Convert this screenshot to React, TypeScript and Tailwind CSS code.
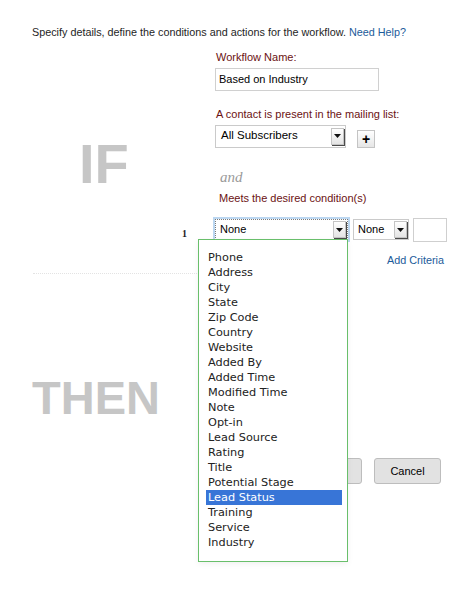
import React from "react";

const campos = [
  "Phone",
  "Address",
  "City",
  "State",
  "Zip Code",
  "Country",
  "Website",
  "Added By",
  "Added Time",
  "Modified Time",
  "Note",
  "Opt-in",
  "Lead Source",
  "Rating",
  "Title",
  "Potential Stage",
  "Lead Status",
  "Training",
  "Service",
  "Industry",
];

// Flechita de los selects viejos estilo Mac: caja clara con sombra oscura a la derecha.
function Flecha() {
  return (
    <span className="flex h-[17px] w-[13px] shrink-0 items-center justify-center border border-[#c4c4c4] bg-gradient-to-b from-white to-[#e4e4e4] shadow-[1px_1px_0_#4a4a4a]">
      <svg width="7" height="4" viewBox="0 0 7 4">
        <path d="M0 0h7L3.5 4z" fill="#111" />
      </svg>
    </span>
  );
}

export default function App() {
  return (
    <div className="relative h-[594px] w-[450px] overflow-hidden bg-white font-['Liberation_Sans',Arial,sans-serif] text-[#1e1e1e]">
      <p className="pl-[32px] pt-[26px] text-[10.8px] leading-[13px]">
        Specify details, define the conditions and actions for the workflow.{" "}
        <a className="text-[#1c5b9a]">Need Help?</a>
      </p>

      {/* IF */}
      <div className="mt-[12px] grid grid-cols-[215px_1fr]">
        <div className="col-start-1 row-span-6 row-start-1 pl-[79px] pt-[85px] text-[56px] font-bold leading-[56px] text-[#c6c6c6]">
          IF
        </div>

        <label className="col-start-2 pl-[1px] text-[11px] leading-[13px] text-[#6b1212]">Workflow Name:</label>
        <div className="col-start-2 mt-[3.5px] flex h-[23px] w-[164px] items-center border border-[#d0d0d0] pl-[3px] text-[11px] text-black">
          Based on Industry
        </div>

        <label className="col-start-2 mt-[17.5px] pl-[1px] text-[11px] leading-[13px] text-[#6b1212]">
          A contact is present in the mailing list:
        </label>
        <div className="col-start-2 mt-[3.5px] flex items-end gap-[11px]">
          <div className="flex h-[23px] w-[131px] items-center justify-between border border-[#cacaca] pl-[5px] pr-[1px] text-[11.5px] text-black">
            All Subscribers
            <Flecha />
          </div>
          <button className="flex h-[18px] w-[18px] items-center justify-center border border-[#c4c4c4] bg-gradient-to-b from-white to-[#e6e6e6] text-[14px] font-bold leading-none text-black">
            +
          </button>
        </div>

        <div className="col-start-2 mt-[19px] pl-[5px] font-['Liberation_Serif',serif] text-[15px] italic leading-[20px] text-[#9a9a9a]">
          and
        </div>
        <label className="col-start-2 mt-[5.5px] pl-[4px] text-[11px] leading-[13px] text-[#6b1212]">
          Meets the desired condition(s)
        </label>

        <div className="col-start-1 pr-[28px] pt-[23.5px] text-right font-['Liberation_Serif',serif] text-[10px] font-bold leading-[10px]">
          1
        </div>
        <div className="col-start-2 mt-[12.5px] flex items-center">
          <div className="flex h-[21px] w-[133px] items-center justify-between border border-dotted border-[#7a7a7a] pl-[4px] pr-[1px] text-[11px] text-black shadow-[0_0_0_2px_#bcd7f1]">
            None
            <Flecha />
          </div>
          <div className="ml-[5px] flex h-[21px] w-[56px] items-center justify-between border border-[#cacaca] pl-[4px] pr-[1px] text-[11px] text-black">
            None
            <Flecha />
          </div>
          <div className="ml-[4px] h-[24px] w-[34px] border border-[#cfcfcf]" />
        </div>

        <a className="col-start-2 mt-[12.5px] pr-[6px] text-right text-[10.8px] leading-[13px] text-[#1c5b9a]">Add Criteria</a>
      </div>

      <div className="ml-[33px] mt-[6px] w-[310px] border-t border-dotted border-[#e3e3e3]" />

      {/* THEN */}
      <div className="mt-[100px] pl-[32px] text-[47px] font-bold leading-[47px] text-[#c6c6c6]">THEN</div>
      <div className="mt-[37px] flex justify-end gap-[12px] pr-[9px]">
        <button className="h-[26px] w-[67px] rounded-[3px] border border-[#bdbdbd] bg-[#e2e2e2] text-[11px] text-black">Save</button>
        <button className="h-[26px] w-[67px] rounded-[3px] border border-[#bdbdbd] bg-[#e2e2e2] text-[11px] text-black">Cancel</button>
      </div>

      {/* Lista desplegada del primer select */}
      <ul className="absolute left-[198px] top-[239px] h-[323px] w-[150px] border border-[#69bf6b] bg-white pl-[7px] pr-[5px] pt-[9.5px] font-['DejaVu_Sans',sans-serif] text-[11.3px] text-[#222] shadow-[0_2px_6px_rgba(0,0,0,0.06)]">
        {campos.map((c) => (
          <li
            key={c}
            className={
              c === "Lead Status"
                ? "h-[15px] bg-[#3875d7] pl-[2px] leading-[15px] text-white"
                : "h-[15px] pl-[2px] leading-[15px]"
            }
          >
            {c}
          </li>
        ))}
      </ul>
    </div>
  );
}
